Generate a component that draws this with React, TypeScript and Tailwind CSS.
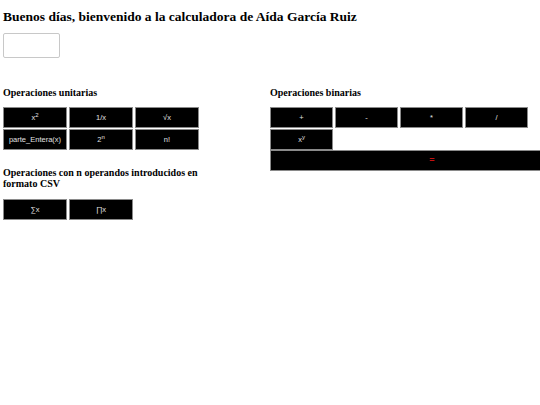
const unitRow1 = [
  { label: <>x<sup className="text-[6px]">2</sup></> },
  { label: <>1/x</> },
  { label: <>√x</> },
];

const unitRow2 = [
  { label: <>parte_Entera(x)</> },
  { label: <>2<sup className="text-[6px]">n</sup></> },
  { label: <>n!</> },
];

const binRow = ['+', '-', '*', '/'];

function Btn({ children, w = 'w-[64px]' }: { children: React.ReactNode; w?: string }) {
  return (
    <button
      className={`${w} h-[21px] shrink-0 border border-[#8a8a8a] bg-black text-[7.5px] leading-none text-[#e0e0e0] font-['Liberation_Sans',Arial,sans-serif]`}
    >
      {children}
    </button>
  );
}

export default function App() {
  return (
    <div className="relative h-[405px] w-[540px] overflow-hidden bg-white px-[3px] font-['Liberation_Serif','Times_New_Roman',serif] text-black">
      <h1 className="mt-[9px] text-[13.5px] font-bold leading-[16px]">
        Buenos días, bienvenido a la calculadora de Aída García Ruiz
      </h1>

      <input
        type="text"
        className="mt-[8px] block h-[25px] w-[57px] rounded-[2px] border border-[#c8c8c8] bg-white"
      />

      <div className="mt-[29px] grid grid-cols-[264px_1fr] gap-x-[3px]">
        <div>
          <h3 className="text-[10px] font-bold leading-[12px]">Operaciones unitarias</h3>
          <div className="mt-[8px] flex flex-col gap-[1px]">
            <div className="flex gap-[2px]">
              {unitRow1.map((b, i) => (
                <Btn key={i}>{b.label}</Btn>
              ))}
            </div>
            <div className="flex gap-[2px]">
              {unitRow2.map((b, i) => (
                <Btn key={i}>{b.label}</Btn>
              ))}
            </div>
          </div>

          <h3 className="mt-[17px] max-w-[230px] text-[10px] font-bold leading-[11px]">
            Operaciones con n operandos introducidos en formato CSV
          </h3>
          <div className="mt-[10px] flex gap-[2px]">
            <Btn>∑x</Btn>
            <Btn>∏x</Btn>
          </div>
        </div>

        <div>
          <h3 className="text-[10px] font-bold leading-[12px]">Operaciones binarias</h3>
          <div className="mt-[8px] flex flex-col">
            <div className="flex gap-[2px]">
              {binRow.map((op) => (
                <Btn key={op} w="w-[63px]">
                  {op}
                </Btn>
              ))}
            </div>
            <div className="mt-[1px] flex">
              <Btn w="w-[63px]">
                x<sup className="text-[6px]">y</sup>
              </Btn>
            </div>
            <div className="flex">
              <button className="h-[21px] w-[324px] shrink-0 border border-[#8a8a8a] bg-black text-[9px] font-bold leading-none text-[#c41010] font-['Liberation_Sans',Arial,sans-serif]">
                =
              </button>
            </div>
          </div>
        </div>
      </div>
    </div>
  );
}
